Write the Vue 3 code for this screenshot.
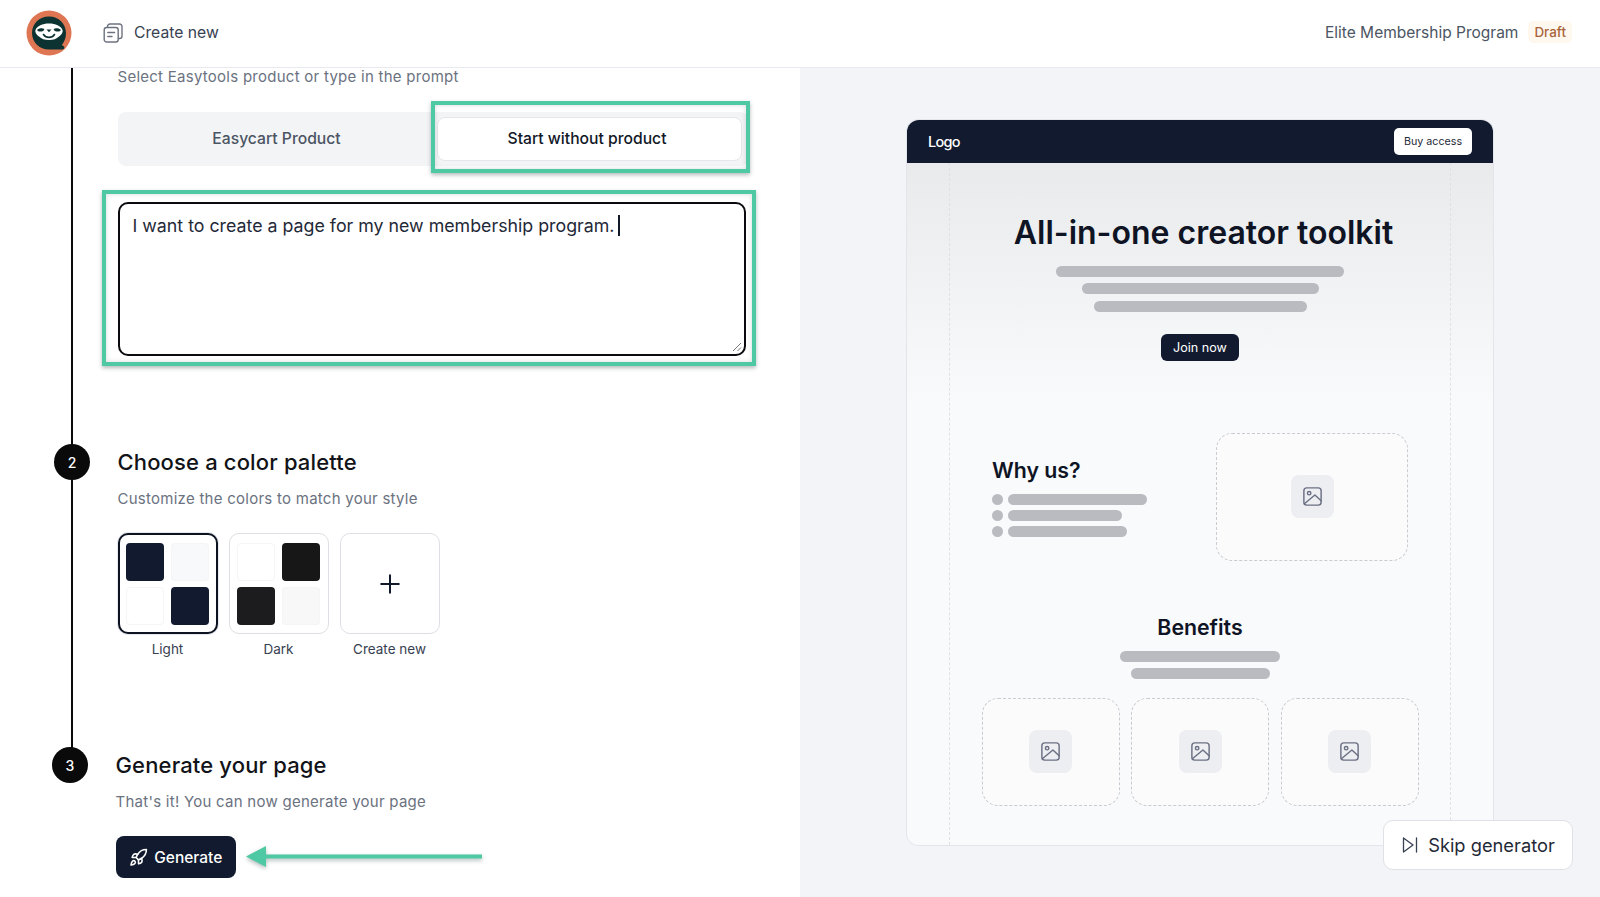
<template>
  <div class="app">
    <header class="topbar">
      <svg class="logo" viewBox="0 0 46 46">
        <circle cx="23" cy="23" r="22.5" fill="#de7654" />
        <path d="M23 6.500C13.300 6.500 6 13.800 6 23s7.300 16.500 17 16.500h13.500c1.800 0 2.600-2.400.9-3.400l-1.600-1c2.400-2.900 4.200-7 4.200-12.100C40 13.800 32.700 6.500 23 6.500z" fill="#0c3332" />
        <path d="M9.500 20c1.500-4 7-6.500 13.500-6.500S35 16 36.500 20c.8 2.500-1.500 5-3.500 6.500-2.500 2.500-5.500 3.500-10 3.500s-7.500-1-10-3.500c-2-1.500-4.300-4-3.500-6.500z" fill="#fff" />
        <path d="M11.500 19.500c2-1.500 5-1.800 6.500-.7.800.8-.2 2-1.500 2.500-1.500.6-3.500.3-4.700-.4-.6-.4-.8-1-.3-1.400zM34.500 19.500c-2-1.500-5-1.800-6.500-.7-.8.8.2 2 1.500 2.500 1.500.6 3.500.3 4.700-.4.600-.4.800-1 .3-1.400z" fill="#0c3332" />
        <path d="M20.500 19.500h5l-2.500 2.800z" fill="#0c3332" />
        <path d="M17.500 24.500c1.300 2 3.300 2.900 5.500 2.900s4.200-.9 5.500-2.900" fill="none" stroke="#0c3332" stroke-width="1.600" stroke-linecap="round" />
      </svg>
      <div class="crumb">
        <svg class="crumb-icon" viewBox="0 0 20 20" fill="none" stroke="#6b7280" stroke-width="1.4" stroke-linecap="round" stroke-linejoin="round">
          <rect x="1.200" y="4.500" width="14" height="14.500" rx="2.500" />
          <path d="M4.500 4.200V3.500A2.500 2.500 0 0 1 7 1h9.500A2.500 2.500 0 0 1 19 3.500V13a2.500 2.500 0 0 1-2.500 2.500h-1" />
          <path d="M4.800 9.500h6.800M4.800 13.500h4.200" />
        </svg>
        <span>Create new</span>
      </div>
      <div class="page-name">
        <span>Elite Membership Program</span>
        <span class="badge">Draft</span>
      </div>
    </header>

    <main class="main">
      <section class="left">
        <div class="rail"></div>

        <div class="step-body first">
          <p class="sub">Select Easytools product or type in the prompt</p>
          <div class="tabs">
            <div class="tab">Easycart Product</div>
            <div class="tab active">Start without product</div>
          </div>
          <div class="prompt">
            <span>I want to create a page for my new membership program.</span><span class="caret"></span>
            <svg class="grip" viewBox="0 0 10 10" stroke="#777" stroke-width="1">
              <path d="M1 9l8-8M5.500 9L9 5.500" />
            </svg>
          </div>
        </div>

        <div class="step step-two">
          <div class="step-head">
            <div class="num">2</div>
            <h2>Choose a color palette</h2>
          </div>
          <div class="step-body">
            <p class="sub gap-sub">Customize the colors to match your style</p>
            <div class="palettes">
              <div v-for="p in palettes" :key="p.name" class="palette">
                <div class="palette-box" :class="{ selected: p.selected }">
                  <template v-if="p.colors">
                    <span v-for="(c, i) in p.colors" :key="i" class="swatch" :class="{ pale: c.pale }" :style="{ background: c.bg }"></span>
                  </template>
                  <svg v-else class="plus" viewBox="0 0 20 20" stroke="#111827" stroke-width="1.800" stroke-linecap="round">
                    <path d="M10 2v16M2 10h16" />
                  </svg>
                </div>
                <div class="palette-name">{{ p.name }}</div>
              </div>
            </div>
          </div>
        </div>

        <div class="step step-three">
          <div class="step-head">
            <div class="num">3</div>
            <h2>Generate your page</h2>
          </div>
          <div class="step-body">
            <p class="sub gap-sub">That's it! You can now generate your page</p>
            <div class="generate-row">
              <button class="generate">
                <svg viewBox="0 0 24 24" fill="none" stroke="#fff" stroke-width="2" stroke-linecap="round" stroke-linejoin="round">
                  <path d="M4.500 16.500c-1.500 1.260-2 5-2 5s3.740-.5 5-2c.71-.84.7-2.130-.09-2.910a2.180 2.180 0 0 0-2.910-.09z" />
                  <path d="m12 15-3-3a22 22 0 0 1 2-3.950A12.880 12.880 0 0 1 22 2c0 2.720-.78 7.500-6 11a22.350 22.350 0 0 1-4 2z" />
                  <path d="M9 12H4s.55-3.030 2-4c1.620-1.080 5 0 5 0" />
                  <path d="M12 15v5s3.030-.55 4-2c1.080-1.620 0-5 0-5" />
                </svg>
                Generate
              </button>
              <svg class="arrow" viewBox="0 0 236 24">
                <path d="M0 11.500L20 1v8.500h216v4H20V22z" fill="#4fc8a4" />
              </svg>
            </div>
          </div>
        </div>
      </section>

      <section class="right">
        <div class="card">
          <div class="card-bar">
            <span class="card-logo">Logo</span>
            <span class="buy">Buy access</span>
          </div>
          <div class="card-body">
            <div class="column">
              <h1>All-in-one creator toolkit</h1>
              <div class="bars hero-bars">
                <i style="width: 288px"></i>
                <i style="width: 237px"></i>
                <i style="width: 213px"></i>
              </div>
              <div class="join">Join now</div>

              <div class="why">
                <div class="why-text">
                  <h3>Why us?</h3>
                  <div v-for="w in whyBars" :key="w" class="bullet">
                    <b></b><i :style="{ width: w + 'px' }"></i>
                  </div>
                </div>
                <div class="image-box wide">
                  <div class="image-tile">
                    <svg viewBox="0 0 24 24" fill="none" stroke="#6b7083" stroke-width="1.500" stroke-linecap="round" stroke-linejoin="round">
                      <rect x="3" y="3" width="18" height="18" rx="3" />
                      <circle cx="8.500" cy="8.500" r="1.800" />
                      <path d="M3.500 19.500L14.500 10.500l6.500 6" />
                    </svg>
                  </div>
                </div>
              </div>

              <h3 class="benefits">Benefits</h3>
              <div class="bars benefit-bars">
                <i style="width: 160px"></i>
                <i style="width: 139px"></i>
              </div>
              <div class="benefit-grid">
                <div v-for="n in 3" :key="n" class="image-box">
                  <div class="image-tile">
                    <svg viewBox="0 0 24 24" fill="none" stroke="#6b7083" stroke-width="1.500" stroke-linecap="round" stroke-linejoin="round">
                      <rect x="3" y="3" width="18" height="18" rx="3" />
                      <circle cx="8.500" cy="8.500" r="1.800" />
                      <path d="M3.500 19.500L14.500 10.500l6.500 6" />
                    </svg>
                  </div>
                </div>
              </div>
            </div>
          </div>
        </div>

        <button class="skip">
          <svg viewBox="0 0 20 20" fill="none" stroke="#374151" stroke-width="1.300" stroke-linecap="round" stroke-linejoin="round">
            <path d="M3.500 3v14L13 10z" />
            <path d="M16.500 3v14" />
          </svg>
          Skip generator
        </button>
      </section>
    </main>
  </div>
</template>

<script setup>
const palettes = [
  {
    name: 'Light',
    selected: true,
    colors: [
      { bg: '#111a2e' },
      { bg: '#f8f9fa', pale: true },
      { bg: '#ffffff', pale: true },
      { bg: '#111a2e' },
    ],
  },
  {
    name: 'Dark',
    colors: [
      { bg: '#ffffff', pale: true },
      { bg: '#171717' },
      { bg: '#1c1c1e' },
      { bg: '#f8f8f9', pale: true },
    ],
  },
  { name: 'Create new' },
]

const whyBars = [139, 114, 119]
</script>

<style>
html,
body {
  margin: 0;
  background: #fff;
}
</style>

<style scoped>
.app {
  width: 1600px;
  height: 897px;
  overflow: hidden;
  font-family: Inter, "Liberation Sans", sans-serif;
  color: #111827;
}

/* top bar */
.topbar {
  height: 65px;
  display: flex;
  align-items: center;
  padding: 0 28px 2px 26px;
  border-bottom: 1px solid #e9eaef;
  background: #fff;
  box-sizing: content-box;
}

.logo {
  width: 46px;
  height: 46px;
}

.crumb {
  display: flex;
  align-items: center;
  gap: 11px;
  margin-left: 31px;
  margin-bottom: 1px;
  font-size: 15.7px;
  color: #374151;
}

.crumb-icon {
  width: 20px;
  height: 20px;
  margin-top: 1px;
}

.page-name {
  margin-left: auto;
  margin-bottom: 1px;
  display: flex;
  align-items: center;
  gap: 10px;
  font-size: 15.5px;
  color: #4b5563;
}

.badge {
  padding: 3px 6px;
  border-radius: 5px;
  background: #fef8ef;
  color: #a9643b;
  font-size: 13.4px;
  font-weight: 500;
}

.main {
  display: flex;
  height: 829px;
}

/* left column */
.left {
  position: relative;
  width: 800px;
  flex-shrink: 0;
  background: #fff;
}

.rail {
  position: absolute;
  left: 71px;
  top: 0;
  width: 2px;
  height: 682px;
  background: #0a0a0a;
}

.step-body.first {
  padding-left: 117.5px;
}

.sub {
  margin: 0;
  padding-top: 1px;
  font-size: 15px;
  line-height: 16px;
  letter-spacing: 0.26px;
  color: #6b7280;
}

.gap-sub {
  padding-top: 0;
  line-height: 20px;
  margin-top: 9px;
}

.tabs {
  margin-top: 27px;
  width: 630px;
  height: 54px;
  box-sizing: border-box;
  padding: 5px 6px;
  display: grid;
  grid-template-columns: 306px 305px;
  column-gap: 7px;
  border-radius: 8px;
  background: #f3f4f6;
}

.tab {
  display: flex;
  align-items: center;
  justify-content: center;
  padding-bottom: 2px;
  font-size: 15.7px;
  font-weight: 500;
  color: #4b5563;
}

.tab.active,
.prompt {
  position: relative;
}

.tab.active {
  padding-right: 4px;
  background: #fff;
  border: 1px solid #e5e7eb;
  border-radius: 8px;
  color: #111827;
}

.tab.active::after,
.prompt::after {
  content: "";
  position: absolute;
  border: 4px solid #4fc8a4;
  box-shadow: 0 2px 4px rgba(40, 60, 60, 0.35), inset 0 0 5px rgba(40, 50, 60, 0.18);
}

.tab.active::after {
  inset: -17px -9px -13px -7px;
}

.prompt::after {
  inset: -14px -12px -12px -18px;
}

.prompt {
  margin-top: 36px;
  width: 628px;
  height: 154px;
  box-sizing: border-box;
  padding: 10px 13px;
  border: 2px solid #0b0b0f;
  border-radius: 10px;
  font-size: 17.8px;
  line-height: 24px;
  color: #1f2937;
  background: #fff;
}

.caret {
  display: inline-block;
  width: 2px;
  height: 21px;
  margin-left: 4px;
  background: #111827;
  vertical-align: -4px;
}

.grip {
  position: absolute;
  right: 2px;
  bottom: 2px;
  width: 10px;
  height: 10px;
}

.step {
  padding-left: 54px;
}

.step-two {
  margin-top: 88px;
}

.step-three {
  margin-top: 88px;
  margin-left: -2px;
}

.step-head {
  display: flex;
  align-items: center;
  gap: 27.5px;
}

.num {
  position: relative;
  width: 36px;
  height: 36px;
  border-radius: 50%;
  display: flex;
  align-items: center;
  justify-content: center;
  background: #0a0a0a;
  color: #fff;
  font-size: 14px;
  font-weight: 500;
}

h2 {
  margin: 0;
  font-size: 22px;
  font-weight: 500;
  letter-spacing: 0.15px;
  color: #111318;
}

.step-body {
  padding-left: 63.5px;
}

.step-three .gap-sub {
  margin-top: 9px;
}

.palettes {
  display: flex;
  gap: 11px;
  margin-top: 24px;
}

.palette {
  width: 100px;
}

.palette-box {
  box-sizing: border-box;
  width: 100px;
  height: 101px;
  padding: 8px 7px;
  border: 1px solid #dddfe4;
  border-radius: 10px;
  display: grid;
  grid-template-columns: 38px 38px;
  grid-template-rows: 38px 38px;
  gap: 6px 7px;
  place-content: center;
  background: #fff;
}

.palette-box.selected {
  border: 2px solid #0d1220;
  box-shadow: 0 0 0 1px #e6e8f0;
}

.swatch {
  border-radius: 4px;
}

.swatch.pale {
  outline: 1px solid #f4f5f7;
  outline-offset: -1px;
}

.plus {
  grid-column: 1 / 3;
  grid-row: 1 / 3;
  place-self: center;
  width: 22px;
  height: 22px;
}

.palette-name {
  margin-top: 5px;
  text-align: center;
  font-size: 13.5px;
  line-height: 20px;
  color: #374151;
}

.generate-row {
  display: flex;
  align-items: center;
  gap: 10px;
  margin-top: 24px;
}

.generate {
  display: flex;
  align-items: center;
  justify-content: center;
  gap: 6px;
  width: 120.5px;
  height: 42px;
  padding: 0;
  border: 0;
  border-radius: 8px;
  background: #111a2e;
  color: #fff;
  font: 500 15.5px Inter, "Liberation Sans", sans-serif;
}

.generate svg {
  width: 19px;
  height: 19px;
}

.arrow {
  width: 236px;
  height: 24px;
  filter: drop-shadow(0 2px 2px rgba(40, 60, 60, 0.35));
}

/* right column */
.right {
  position: relative;
  flex: 1;
  background: #f3f4f8;
  padding: 52px 0 0 107px;
}

.card {
  width: 586px;
  height: 725px;
  display: flex;
  flex-direction: column;
  border-radius: 12px;
  overflow: hidden;
  box-shadow: 0 0 0 1px #e3e5ea;
}

.card-bar {
  height: 43px;
  flex-shrink: 0;
  display: flex;
  align-items: center;
  justify-content: space-between;
  padding: 0 21px;
  background: #111a2e;
}

.card-logo {
  color: #fff;
  font-size: 14.5px;
  font-weight: 500;
  letter-spacing: -0.7px;
}

.buy {
  width: 78px;
  height: 27px;
  display: flex;
  align-items: center;
  justify-content: center;
  border-radius: 5px;
  background: #fff;
  color: #1f2937;
  font-size: 10.7px;
}

.card-body {
  flex: 1;
  background: linear-gradient(#e9eaec 0, #f9fafc 240px);
}

.column {
  box-sizing: border-box;
  width: 502px;
  height: 100%;
  margin: 0 auto;
  padding-top: 50px;
  border-left: 1px dashed #dfe1e5;
  border-right: 1px dashed #dfe1e5;
  display: flex;
  flex-direction: column;
  align-items: center;
}

h1 {
  margin: 0;
  padding-left: 7px;
  font-size: 32px;
  line-height: 40px;
  font-weight: 600;
  color: #0f1424;
}

.bars {
  display: flex;
  flex-direction: column;
  align-items: center;
}

.bars i,
.bullet i,
.bullet b {
  display: block;
  height: 11px;
  border-radius: 6px;
  background: #b9bbc0;
}

.hero-bars {
  margin-top: 13px;
  gap: 6.4px;
}

.join {
  width: 78px;
  height: 27px;
  margin-top: 22px;
  display: flex;
  align-items: center;
  justify-content: center;
  border-radius: 6px;
  background: #111a2e;
  color: #fff;
  font-size: 12.6px;
}

.why {
  align-self: stretch;
  display: flex;
  justify-content: space-between;
  margin-top: 72px;
  padding: 0 42px;
}

.why-text {
  padding-top: 23px;
}

h3 {
  margin: 0;
  font-size: 21.3px;
  line-height: 28px;
  font-weight: 600;
  color: #0f1424;
}

.bullet {
  display: flex;
  gap: 5px;
  margin-bottom: 5px;
}

.why-text h3 {
  margin-bottom: 10px;
}

.bullet b {
  width: 11px;
  border-radius: 50%;
}

.image-box {
  box-sizing: border-box;
  width: 138px;
  height: 108px;
  display: flex;
  align-items: center;
  justify-content: center;
  border: 1px dashed #c9cbd0;
  border-radius: 16px;
  background: #fbfbfc;
}

.image-box.wide {
  width: 192px;
  height: 128px;
}

.image-tile {
  width: 43px;
  height: 43px;
  display: flex;
  align-items: center;
  justify-content: center;
  border-radius: 8px;
  background: #edeef2;
}

.image-tile svg {
  width: 23px;
  height: 23px;
}

.benefits {
  margin-top: 52px;
}

.benefit-bars {
  margin-top: 10px;
  gap: 6px;
}

.benefit-grid {
  display: flex;
  gap: 11.5px;
  margin-top: 19px;
}

.skip {
  position: absolute;
  left: 582.5px;
  top: 752px;
  width: 190px;
  height: 50px;
  display: flex;
  align-items: center;
  justify-content: center;
  gap: 8px;
  padding: 0;
  border: 1px solid #dfe1e6;
  border-radius: 10px;
  background: #fff;
  color: #1f2937;
  font: 400 18.3px Inter, "Liberation Sans", sans-serif;
}

.skip svg {
  width: 20px;
  height: 20px;
}
</style>
